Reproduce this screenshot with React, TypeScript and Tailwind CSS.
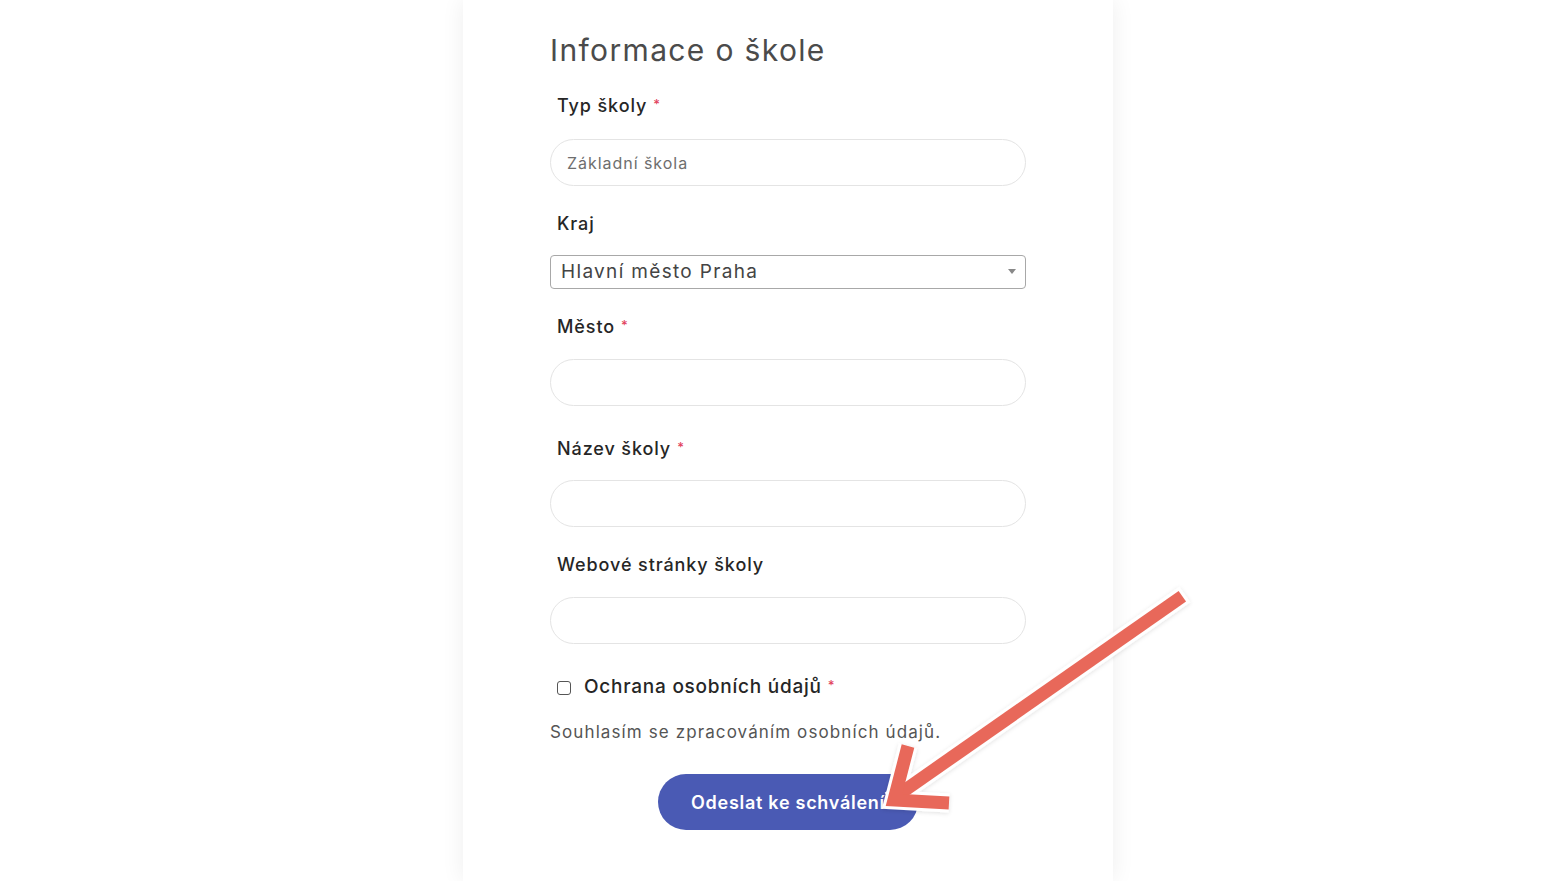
import React from "react";

const font = { fontFamily: "Inter, 'Noto Sans', 'Liberation Sans', sans-serif" };

function Label({ text, required, className = "" }: { text: string; required?: boolean; className?: string }) {
  return (
    <div className={`pl-[7px] text-[18px] font-medium leading-[27px] tracking-[0.05em] text-[#262626] ${className}`}>
      {text}
      {required ? <span className="relative -top-[3px] ml-[6px] text-[13px] text-[#e2435d]">*</span> : null}
    </div>
  );
}

function TextInput({ placeholder, className = "" }: { placeholder?: string; className?: string }) {
  return (
    <input
      type="text"
      placeholder={placeholder}
      className={`block h-[47px] w-full rounded-full border border-[#e4e4e4] bg-white px-[16px] text-[16px] tracking-[0.06em] text-[#333] outline-none placeholder:text-[#6e6e6e] ${className}`}
    />
  );
}

function Arrow() {
  return (
    <svg className="pointer-events-none absolute left-0 top-0" width="1565" height="881" viewBox="0 0 1565 881">
      <defs>
        <filter id="sh" x="-10%" y="-10%" width="120%" height="120%">
          <feDropShadow dx="0" dy="1" stdDeviation="2" floodColor="#000" floodOpacity="0.12" />
        </filter>
      </defs>
      <g filter="url(#sh)">
        <line x1="1177" y1="600" x2="898" y2="795" stroke="#fff" strokeWidth="19" strokeLinecap="square" />
        <polyline points="908,746 894,800 949,803" fill="none" stroke="#fff" strokeWidth="19" strokeLinejoin="miter" />
        <line x1="1177" y1="600" x2="898" y2="795" stroke="#e8685a" strokeWidth="13" strokeLinecap="square" />
        <polyline points="908,746 894,800 949,803" fill="none" stroke="#e8685a" strokeWidth="13" strokeLinejoin="miter" />
      </g>
    </svg>
  );
}

export default function App() {
  return (
    <div className="relative flex min-h-[881px] justify-center overflow-hidden bg-white pl-[11px]" style={font}>
      <div className="min-h-[881px] w-[650px] bg-white px-[87px] pt-[28px] shadow-[0_0_22px_rgba(0,0,0,0.07)]">
        <h2 className="text-[30px] font-normal leading-[44px] tracking-[0.045em] text-[#4b4b4b]">Informace o škole</h2>

        <Label text="Typ školy" required className="mt-[20px]" />
        <TextInput placeholder="Základní škola" className="mt-[18px]" />

        <Label text="Kraj" className="mt-[24px]" />
        <div className="relative mt-[18px]">
          <select
            defaultValue="praha"
            className="block h-[34px] w-full appearance-none rounded-[4px] border border-[#a8a8a8] bg-white pl-[10px] text-[19px] tracking-[0.07em] text-[#444] outline-none"
          >
            <option value="praha">Hlavní město Praha</option>
          </select>
          <span className="pointer-events-none absolute right-[10px] top-[14px] h-0 w-0 border-x-[4px] border-t-[5px] border-x-transparent border-t-[#888]" />
        </div>

        <Label text="Město" required className="mt-[24px]" />
        <TextInput className="mt-[17px]" />

        <Label text="Název školy" required className="mt-[29px]" />
        <TextInput className="mt-[16px]" />

        <Label text="Webové stránky školy" className="mt-[24px]" />
        <TextInput className="mt-[19px] h-[46px]" />

        <div className="mt-[29px] flex items-center pl-[7px]">
          <span className="h-[14px] w-[14px] rounded-[3px] border-[1.5px] border-[#555] bg-white" />
          <span className="ml-[13px] text-[19px] font-medium leading-[27px] tracking-[0.04em] text-[#262626]">
            Ochrana osobních údajů
            <span className="relative -top-[3px] ml-[6px] text-[13px] text-[#e2435d]">*</span>
          </span>
        </div>

        <p className="mt-[17px] text-[17px] leading-[27px] tracking-[0.065em] text-[#555]">
          Souhlasím se zpracováním osobních údajů.
        </p>

        <button
          type="button"
          className="mx-auto mt-[28px] block h-[56px] w-[260px] rounded-full bg-[#4a5ab4] text-[18px] font-semibold tracking-[0.04em] text-white"
        >
          Odeslat ke schválení
        </button>
      </div>
      <Arrow />
    </div>
  );
}
